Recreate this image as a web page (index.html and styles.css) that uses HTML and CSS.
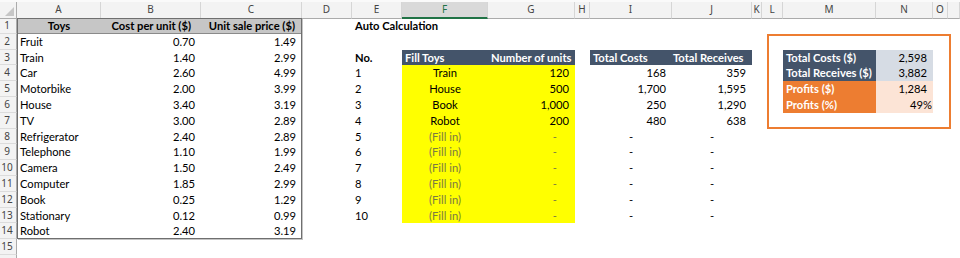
FILE: index.html
```html
<!DOCTYPE html>
<html>
<head>
<meta charset="utf-8">
<link rel="stylesheet" href="styles.css">
</head>
<body>
<div class="sheet">
  <div class="colheads">
    <div class="ch corner"></div>
    <div class="ch">A</div><div class="ch">B</div><div class="ch">C</div><div class="ch">D</div>
    <div class="ch">E</div><div class="ch sel">F</div><div class="ch">G</div><div class="ch">H</div>
    <div class="ch">I</div><div class="ch">J</div><div class="ch">K</div><div class="ch">L</div>
    <div class="ch">M</div><div class="ch">N</div><div class="ch">O</div><div class="ch"></div>
  </div>
  <div class="rowheads">
    <div class="rh">1</div><div class="rh">2</div><div class="rh">3</div><div class="rh">4</div>
    <div class="rh">5</div><div class="rh">6</div><div class="rh">7</div><div class="rh">8</div>
    <div class="rh">9</div><div class="rh">10</div><div class="rh">11</div><div class="rh">12</div>
    <div class="rh">13</div><div class="rh">14</div><div class="rh">15</div><div class="rh"></div>
  </div>

  <div class="toys">
    <div class="c th ctr">Toys</div><div class="c th r hb">Cost per unit ($)</div><div class="c th r hc">Unit sale price ($)</div>
    <div class="c">Fruit</div><div class="c r">0.70</div><div class="c r">1.49</div>
    <div class="c">Train</div><div class="c r">1.40</div><div class="c r">2.99</div>
    <div class="c">Car</div><div class="c r">2.60</div><div class="c r">4.99</div>
    <div class="c">Motorbike</div><div class="c r">2.00</div><div class="c r">3.99</div>
    <div class="c">House</div><div class="c r">3.40</div><div class="c r">3.19</div>
    <div class="c">TV</div><div class="c r">3.00</div><div class="c r">2.89</div>
    <div class="c">Refrigerator</div><div class="c r">2.40</div><div class="c r">2.89</div>
    <div class="c">Telephone</div><div class="c r">1.10</div><div class="c r">1.99</div>
    <div class="c">Camera</div><div class="c r">1.50</div><div class="c r">2.49</div>
    <div class="c">Computer</div><div class="c r">1.85</div><div class="c r">2.99</div>
    <div class="c">Book</div><div class="c r">0.25</div><div class="c r">1.29</div>
    <div class="c">Stationary</div><div class="c r">0.12</div><div class="c r">0.99</div>
    <div class="c">Robot</div><div class="c r">2.40</div><div class="c r">3.19</div>
  </div>

  <div class="title c b">Auto Calculation</div>

  <div class="calc">
    <div class="c b">No.</div><div class="c hd">Fill Toys</div><div class="c hd r">Number of units</div>
    <div class="c">1</div><div class="c y ctr">Train</div><div class="c y r">120</div>
    <div class="c">2</div><div class="c y ctr">House</div><div class="c y r">500</div>
    <div class="c">3</div><div class="c y ctr">Book</div><div class="c y r">1,000</div>
    <div class="c">4</div><div class="c y ctr">Robot</div><div class="c y r">200</div>
    <div class="c">5</div><div class="c y ctr muted">(Fill in)</div><div class="c y dash muted">-</div>
    <div class="c">6</div><div class="c y ctr muted">(Fill in)</div><div class="c y dash muted">-</div>
    <div class="c">7</div><div class="c y ctr muted">(Fill in)</div><div class="c y dash muted">-</div>
    <div class="c">8</div><div class="c y ctr muted">(Fill in)</div><div class="c y dash muted">-</div>
    <div class="c">9</div><div class="c y ctr muted">(Fill in)</div><div class="c y dash muted">-</div>
    <div class="c">10</div><div class="c y ctr muted">(Fill in)</div><div class="c y dash muted">-</div>
  </div>

  <div class="totals">
    <div class="c hd">Total Costs</div><div class="c hd tight">Total Receives</div>
    <div class="c r">168</div><div class="c r">359</div>
    <div class="c r">1,700</div><div class="c r">1,595</div>
    <div class="c r">250</div><div class="c r">1,290</div>
    <div class="c r">480</div><div class="c r">638</div>
    <div class="c ctr">-</div><div class="c ctr">-</div>
    <div class="c ctr">-</div><div class="c ctr">-</div>
    <div class="c ctr">-</div><div class="c ctr">-</div>
    <div class="c ctr">-</div><div class="c ctr">-</div>
    <div class="c ctr">-</div><div class="c ctr">-</div>
    <div class="c ctr">-</div><div class="c ctr">-</div>
  </div>

  <div class="summary">
    <div class="c hd">Total Costs ($)</div><div class="c lb r">2,598</div>
    <div class="c hd">Total Receives ($)</div><div class="c lb r">3,882</div>
    <div class="c og">Profits ($)</div><div class="c pe r">1,284</div>
    <div class="c og">Profits (%)</div><div class="c pe r pct">49%</div>
  </div>

  <div class="frame"></div>
</div>
</body>
</html>
```
FILE: styles.css
```css
html, body {
  margin: 0;
  padding: 0;
  background: #fff;
}
body {
  font-family: Lato, "Liberation Sans", sans-serif;
  font-size: 11.2px;
  color: #000;
  overflow: hidden;
}
.sheet {
  --cols: 17px 84px 100px 101px 50px 50px 86px 87px 15px 82px 80px 10px 21px 93px 57px 15px 12px;
  position: relative;
  width: 960px;
  height: 258px;
  display: grid;
  grid-template-columns: var(--cols);
  grid-template-rows: 18px repeat(15, 15.8px) 1fr;
  overflow: hidden;
}
.colheads {
  grid-column: 1 / -1;
  grid-row: 1;
  display: grid;
  grid-template-columns: var(--cols);
  background: #f3f3f3;
  border-top: 2px solid #fafafa;
}
.ch {
  box-sizing: border-box;
  border-right: 1px solid #d6d6d6;
  border-bottom: 1px solid #ababab;
  text-align: center;
  font-family: "Noto Sans", "DejaVu Sans", sans-serif;
  font-size: 10px;
  line-height: 15px;
  color: #444;
}
.ch.sel {
  background: #d9d9d9;
  border-bottom: 2px solid #217346;
  color: #217346;
}
.corner {
  position: relative;
  border-right-color: #ababab;
}
.corner::after {
  content: "";
  position: absolute;
  right: 2px;
  bottom: 2px;
  border-style: solid;
  border-width: 0 0 9px 9px;
  border-color: transparent transparent #c6c6c6 transparent;
}
.rowheads {
  grid-column: 1;
  grid-row: 2 / -1;
  display: grid;
  grid-template-rows: repeat(16, 15.8px);
  background: #f3f3f3;
}
.rh {
  box-sizing: border-box;
  border-right: 1px solid #ababab;
  border-bottom: 1px solid #dcdcdc;
  text-align: center;
  padding-right: 2px;
  font-family: "Noto Sans", "DejaVu Sans", sans-serif;
  font-size: 10px;
  line-height: 15px;
  color: #444;
}
.c {
  box-sizing: border-box;
  padding: 0 3px;
  line-height: 15.8px;
  white-space: nowrap;
  overflow: hidden;
}
.r { text-align: right; padding-right: 6px; }
.ctr { text-align: center; }
.b { font-weight: bold; }

.toys {
  grid-column: 2 / 5;
  grid-row: 2 / 16;
  display: grid;
  grid-template-columns: 84px 100px 101px;
  grid-auto-rows: 15.8px;
  outline: 1px solid #6f6f6f;
  outline-offset: -1px;
  box-shadow: 1px 1px 0 #c4c4c4;
}
.th {
  background: #c6c6c6;
  font-weight: bold;
  border-bottom: 1px solid #8a8a8a;
}
.th.hb { padding-right: 10px; }
.th.hc { padding-right: 7px; }
.title {
  grid-column: 6 / 9;
  grid-row: 2;
}
.calc {
  grid-column: 6 / 9;
  grid-row: 4 / 15;
  display: grid;
  grid-template-columns: 50px 86px 87px;
  grid-auto-rows: 15.8px;
}
.hd {
  background: #44546a;
  color: #fff;
  font-weight: bold;
}
.y { background: #ffff00; }
.muted { color: #7a7a44; }
.dash { text-align: right; padding-right: 18px; }
.totals {
  grid-column: 10 / 12;
  grid-row: 4 / 15;
  display: grid;
  grid-template-columns: 82px 80px;
  grid-auto-rows: 15.8px;
}
.tight { padding-left: 1px; }
.summary {
  grid-column: 14 / 16;
  grid-row: 4 / 8;
  display: grid;
  grid-template-columns: 93px 57px;
  grid-auto-rows: 15.8px;
}
.lb { background: #d6dce4; }
.og { background: #ed7d31; color: #fff; font-weight: bold; }
.pe { background: #fce4d6; }
.pct { padding-right: 1px; }
.frame {
  position: absolute;
  left: 767px;
  top: 34px;
  width: 184px;
  height: 95px;
  box-sizing: border-box;
  border: 2px solid #ed7d31;
  pointer-events: none;
}
```
